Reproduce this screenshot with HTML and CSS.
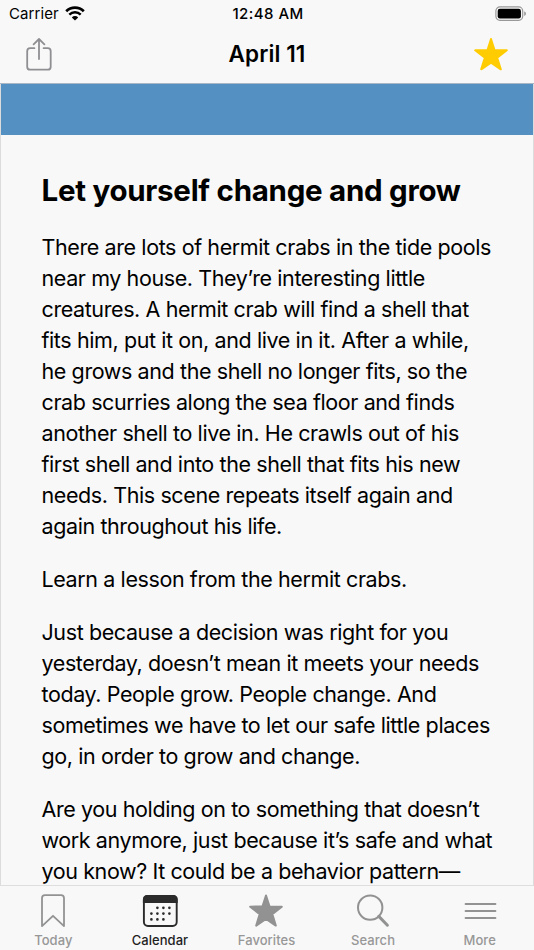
FILE: index.html
```html
<!DOCTYPE html>
<html lang="en">
<head>
    <meta charset="UTF-8">
    <meta name="viewport" content="width=device-width, initial-scale=1.0">
    <title>April 11</title>
    <link rel="stylesheet" href="styles.css">
</head>
<body>

    <!-- Status Bar -->
    <div class="status-bar">
        <div class="carrier">
            <span>Carrier</span>
            <svg class="wifi" width="20" height="15" viewBox="0 0 20 15">
                <path d="M1.2 5.2 A12.6 12.6 0 0 1 18.8 5.2" fill="none" stroke="#000" stroke-width="2.7"/>
                <path d="M4.3 8.6 A8.1 8.1 0 0 1 15.7 8.6" fill="none" stroke="#000" stroke-width="2.4"/>
                <path d="M10 14.6 L6.8 11.4 A4.6 4.6 0 0 1 13.2 11.4 Z"/>
            </svg>
        </div>
        <div class="time">12:48 AM</div>
        <svg class="battery" width="32" height="16" viewBox="0 0 32 16">
            <rect x=".9" y=".9" width="26.8" height="13.4" rx="4" fill="none" stroke="#989898" stroke-width="1.2"/>
            <rect x="2.7" y="2.7" width="23.2" height="9.8" rx="2.2"/>
            <path d="M29.2 5.2 Q31 6 31 7.6 T29.2 10 Z" fill="#989898"/>
        </svg>
    </div>

    <!-- Navigation -->
    <nav>
        <svg class="share" width="27" height="34" viewBox="0 0 27 34" fill="none" stroke="#8f8f93" stroke-width="1.8" stroke-linecap="round" stroke-linejoin="round">
            <path d="M8.4 10.2 H4.2 Q1.2 10.2 1.2 13.2 V28.7 Q1.2 31.7 4.2 31.7 H21.7 Q24.7 31.7 24.7 28.7 V13.2 Q24.7 10.2 21.7 10.2 H17.6"/>
            <path d="M13 21 V1.2 M7.6 6.3 L13 1 L18.4 6.3"/>
        </svg>
        <h1>April 11</h1>
        <svg class="star" width="34" height="33" viewBox="0 0 34 33">
            <path d="M17 1 L20.5 12 L32.8 12.3 L23.2 19.7 L26.8 31.3 L17 24.6 L7.2 31.3 L10.8 19.7 L1.2 12.3 L13.5 12 Z" fill="#ffcc02" stroke="#ffcc02" stroke-width="2" stroke-linejoin="round"/>
        </svg>
    </nav>

    <!-- Daily Reading -->
    <main>
        <div class="banner"></div>
        <article>
            <h2>Let yourself change and grow</h2>
            <p>There are lots of hermit crabs in the tide pools<br>
            near my house. They’re interesting little<br>
            creatures. A hermit crab will find a shell that<br>
            fits him, put it on, and live in it. After a while,<br>
            he grows and the shell no longer fits, so the<br>
            crab scurries along the sea floor and finds<br>
            another shell to live in. He crawls out of his<br>
            first shell and into the shell that fits his new<br>
            needs. This scene repeats itself again and<br>
            again throughout his life.</p>
            <p>Learn a lesson from the hermit crabs.</p>
            <p>Just because a decision was right for you<br>
            yesterday, doesn’t mean it meets your needs<br>
            today. People grow. People change. And<br>
            sometimes we have to let our safe little places<br>
            go, in order to grow and change.</p>
            <p>Are you holding on to something that doesn’t<br>
            work anymore, just because it’s safe and what<br>
            you know? It could be a behavior pattern—</p>
        </article>
    </main>

    <!-- Tab Bar -->
    <footer>
        <div class="tab">
            <svg width="36" height="36" viewBox="0 0 36 36">
                <path d="M7 33.1 V5.2 Q7 2.2 10 2.2 H26 Q29 2.2 29 5.2 V33.1 L18 22.8 Z" fill="none" stroke="#929292" stroke-width="1.8" stroke-linejoin="round"/>
            </svg>
            <span>Today</span>
        </div>
        <div class="tab active">
            <svg width="36" height="36" viewBox="0 0 36 36">
                <rect x="1.9" y="3" width="32.8" height="30" rx="4" fill="none" stroke="#2b2b2b" stroke-width="1.9"/>
                <path d="M.9 10 V6.5 Q.9 2 5.4 2 H31.2 Q35.7 2 35.7 6.5 V10 Z" fill="#2b2b2b"/>
                <path d="M15.4 14.8 h0 M21.4 14.8 h0 M27.4 14.8 h0 M9.4 20.6 h0 M15.4 20.6 h0 M21.4 20.6 h0 M27.4 20.6 h0 M9.4 26.4 h0 M15.4 26.4 h0 M21.4 26.4 h0" stroke="#2b2b2b" stroke-width="2.7" stroke-linecap="round"/>
            </svg>
            <span>Calendar</span>
        </div>
        <div class="tab">
            <svg width="36" height="36" viewBox="0 0 36 36">
                <path d="M18 2.5 L21.5 13.4 L33.8 13.7 L24.3 21.1 L27.8 32.6 L18 25.9 L8.2 32.6 L11.7 21.1 L2.2 13.7 L14.5 13.4 Z" fill="#929292" stroke="#929292" stroke-width="2" stroke-linejoin="round"/>
            </svg>
            <span>Favorites</span>
        </div>
        <div class="tab">
            <svg width="36" height="36" viewBox="0 0 36 36" fill="none" stroke="#929292">
                <circle cx="15.2" cy="14.6" r="12.2" stroke-width="2"/>
                <path d="M23.8 23.4 L32.4 32.2" stroke-width="3" stroke-linecap="round"/>
            </svg>
            <span>Search</span>
        </div>
        <div class="tab">
            <svg width="36" height="36" viewBox="0 0 36 36">
                <path d="M3.6 11 H33.4 M3.6 18 H33.4 M3.6 25 H33.4" stroke="#929292" stroke-width="2" stroke-linecap="round"/>
            </svg>
            <span>More</span>
        </div>
    </footer>

</body>
</html>
```
FILE: styles.css
```css
/* Global Styles */
* {
    margin: 0;
    padding: 0;
    box-sizing: border-box;
}
body {
    width: 534px;
    height: 950px;
    display: flex;
    flex-direction: column;
    overflow: hidden;
    font-family: Inter, 'Liberation Sans', sans-serif;
    background: #f8f8f8;
    color: #000;
}
svg {
    display: block;
}

/* Status Bar */
.status-bar {
    display: grid;
    grid-template-columns: 1fr auto 1fr;
    align-items: center;
    height: 28px;
    padding: 0 7px 0 9px;
    font-size: 15px;
    line-height: 28px;
}
.carrier {
    display: flex;
    align-items: center;
    gap: 6px;
    letter-spacing: 0.1px;
}
.wifi {
    margin-top: -2px;
}
.time {
    font-weight: 500;
    letter-spacing: 0.45px;
}
.battery {
    justify-self: end;
}

/* Navbar */
nav {
    display: grid;
    grid-template-columns: 1fr auto 1fr;
    align-items: center;
    height: 56px;
    padding: 0 26px 2px;
    border-bottom: 1px solid #a9b7c4;
}
nav h1 {
    padding-bottom: 2px;
    font-size: 22.5px;
    font-weight: 600;
    letter-spacing: 0.1px;
}
.star {
    justify-self: end;
}

/* Reading */
main {
    flex: 1;
    min-height: 0;
    overflow: hidden;
    border-left: 1px solid #dcdcdc;
    border-right: 1px solid #dcdcdc;
}
.banner {
    height: 51px;
    background: #5590c3;
}
article {
    padding: 36px 0 0 40.5px;
    white-space: nowrap;
}
article h2 {
    margin-bottom: 23px;
    font-size: 29.5px;
    font-weight: 700;
    line-height: 38px;
    letter-spacing: -0.27px;
}
article p {
    margin-bottom: 22px;
    font-size: 21.5px;
    line-height: 31px;
    letter-spacing: -0.4px;
}

/* Tab Bar */
footer {
    display: flex;
    height: 65px;
    padding: 7px 1px 0 0;
    border-top: 1px solid #dedede;
}
.tab {
    flex: 1;
    display: flex;
    flex-direction: column;
    align-items: center;
    color: #979797;
    font-size: 13px;
    font-weight: 500;
    line-height: 16px;
    letter-spacing: 0.05px;
}
.tab span {
    margin-top: 3px;
}
.tab.active {
    color: #1f1f1f;
}
```
